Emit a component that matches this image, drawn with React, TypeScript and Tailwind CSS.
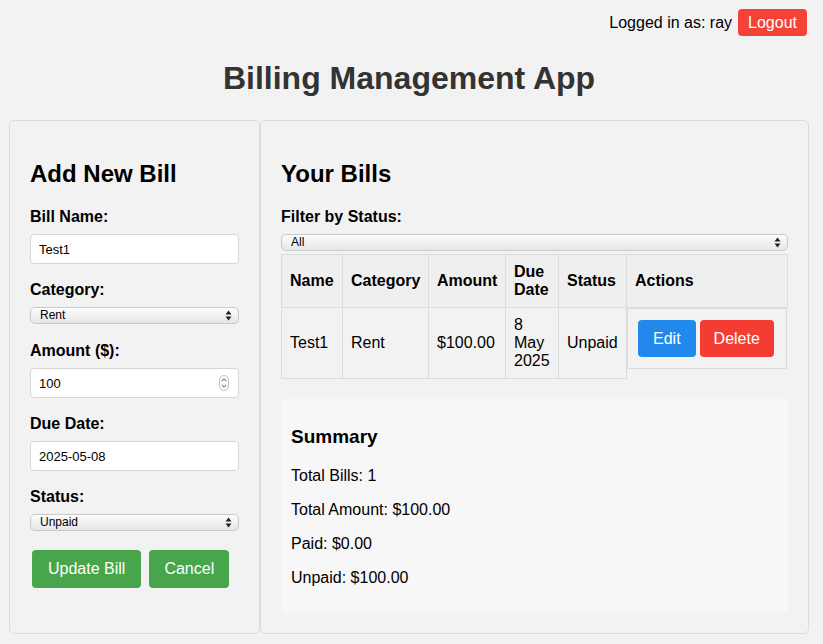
import React from 'react';

const font = { fontFamily: '"Liberation Sans", Arial, sans-serif' };

const SelectArrows: React.FC = () => (
  <svg width="7" height="11" viewBox="0 0 7 11" className="absolute right-[7px] top-[3px] pointer-events-none">
    <path d="M3.5 0.5 L6.5 4.5 L0.5 4.5 Z" fill="#222" />
    <path d="M3.5 10.5 L6.5 6.5 L0.5 6.5 Z" fill="#222" />
  </svg>
);

const NativeSelect: React.FC<{ value: string; options: string[] }> = ({ value, options }) => (
  <div className="relative w-full">
    <select
      defaultValue={value}
      className="appearance-none block w-full h-[17px] rounded-[5px] border border-[#c9c9c9] bg-gradient-to-b from-[#fdfdfd] via-[#f1f1f1] to-[#e6e6e6] pl-[9px] pr-[20px] text-[12px] leading-[15px] text-black shadow-[inset_0_1px_0_#fff]"
    >
      {options.map((o) => (
        <option key={o}>{o}</option>
      ))}
    </select>
    <SelectArrows />
  </div>
);

const Spinner: React.FC = () => (
  <svg width="10" height="16" viewBox="0 0 10 16" className="absolute right-[10px] top-[7px] pointer-events-none">
    <rect x="0.5" y="0.5" width="9" height="15" rx="4.5" fill="#fafafa" stroke="#c4c4c4" />
    <path d="M2.8 6 L5 3.8 L7.2 6" fill="none" stroke="#555" strokeWidth="1" />
    <path d="M2.8 10 L5 12.2 L7.2 10" fill="none" stroke="#555" strokeWidth="1" />
  </svg>
);

const inputCls =
  'block w-full h-[30px] rounded-[4px] border border-[#d6d6d6] bg-white px-[8px] text-[13px] text-black outline-none';

const Label: React.FC<{ children: React.ReactNode }> = ({ children }) => (
  <label className="block mb-[8px] text-[16px] leading-[18px] font-bold">{children}</label>
);

const bills = [{ name: 'Test1', category: 'Rent', amount: '$100.00', due: '8 May 2025', status: 'Unpaid' }];

export default function App() {
  return (
    <div style={font} className="min-h-screen bg-[#f2f2f2] text-black">
      <div className="w-[800px] ml-[9px]">
        <header className="flex justify-end items-center gap-[6px] pt-[9px] pr-[2px]">
          <span className="text-[16px] leading-[18px]">Logged in as: ray</span>
          <button className="h-[27px] px-[10px] rounded-[4px] bg-[#f44336] text-white text-[16px] leading-[18px]">
            Logout
          </button>
        </header>

        <h1 className="text-center text-[32px] leading-[37px] font-bold text-[#333] mt-[24px] mb-[23px]">
          Billing Management App
        </h1>

        <div className="flex">
          {/* form */}
          <section className="w-[251px] shrink-0 border border-[#dcdcdc] rounded-[5px] p-[20px]">
            <h2 className="text-[24px] leading-[28px] font-bold mt-[19px] mb-[20px]">Add New Bill</h2>

            <div className="mb-[17px]">
              <Label>Bill Name:</Label>
              <input className={inputCls} defaultValue="Test1" />
            </div>
            <div className="mb-[18px]">
              <Label>Category:</Label>
              <NativeSelect value="Rent" options={['Rent', 'Utilities', 'Groceries', 'Other']} />
            </div>
            <div className="mb-[17px]">
              <Label>Amount ($):</Label>
              <div className="relative">
                <input className={inputCls} defaultValue="100" />
                <Spinner />
              </div>
            </div>
            <div className="mb-[17px]">
              <Label>Due Date:</Label>
              <input className={inputCls} defaultValue="2025-05-08" />
            </div>
            <div className="mb-[19px]">
              <Label>Status:</Label>
              <NativeSelect value="Unpaid" options={['Unpaid', 'Paid']} />
            </div>

            <div className="flex gap-[8px] ml-[2px]">
              <button className="h-[38px] px-[16px] rounded-[4px] bg-[#47a64b] text-white text-[16px]">Update Bill</button>
              <button className="h-[38px] px-[15px] rounded-[4px] bg-[#47a64b] text-white text-[16px]">Cancel</button>
            </div>
          </section>

          {/* list */}
          <section className="flex-1 border border-[#dcdcdc] rounded-[5px] p-[20px]">
            <h2 className="text-[24px] leading-[28px] font-bold mt-[19px] mb-[20px]">Your Bills</h2>
            <Label>Filter by Status:</Label>
            <NativeSelect value="All" options={['All', 'Paid', 'Unpaid']} />

            <table className="w-full table-fixed border-collapse mt-[3px] text-[16px] leading-[18px]">
              <colgroup>
                <col className="w-[61px]" />
                <col className="w-[86px]" />
                <col className="w-[77px]" />
                <col className="w-[53px]" />
                <col className="w-[68px]" />
                <col />
              </colgroup>
              <thead>
                <tr className="bg-[#efefef]">
                  {['Name', 'Category', 'Amount', 'Due Date', 'Status', 'Actions'].map((h) => (
                    <th key={h} className="border border-[#dcdcdc] p-[8px] text-left font-bold">
                      {h}
                    </th>
                  ))}
                </tr>
              </thead>
              <tbody>
                {bills.map((b) => (
                  <tr key={b.name}>
                    <td className="border border-[#dcdcdc] p-[8px]">{b.name}</td>
                    <td className="border border-[#dcdcdc] p-[8px]">{b.category}</td>
                    <td className="border border-[#dcdcdc] p-[8px]">{b.amount}</td>
                    <td className="border border-[#dcdcdc] p-[8px]">{b.due}</td>
                    <td className="border border-[#dcdcdc] p-[8px]">{b.status}</td>
                    <td className="p-0 align-top">
                      <div className="flex items-center gap-[4px] h-[61px] border border-[#dcdcdc] pl-[10px] mr-[1px]">
                        <button className="h-[37px] px-[15px] rounded-[4px] bg-[#2189ec] text-white text-[16px]">Edit</button>
                        <button className="h-[37px] px-[14px] rounded-[4px] bg-[#f43c33] text-white text-[16px]">Delete</button>
                      </div>
                    </td>
                  </tr>
                ))}
              </tbody>
            </table>

            <div className="mt-[20px] bg-[#f7f7f7] rounded-[5px] p-[10px]">
              <h3 className="text-[19px] leading-[22px] font-bold mt-[17px] mb-[19px]">Summary</h3>
              <p className="text-[16px] leading-[18px] mb-[16px]">Total Bills: 1</p>
              <p className="text-[16px] leading-[18px] mb-[16px]">Total Amount: $100.00</p>
              <p className="text-[16px] leading-[18px] mb-[16px]">Paid: $0.00</p>
              <p className="text-[16px] leading-[18px] mb-[16px]">Unpaid: $100.00</p>
            </div>
          </section>
        </div>
      </div>
    </div>
  );
}
